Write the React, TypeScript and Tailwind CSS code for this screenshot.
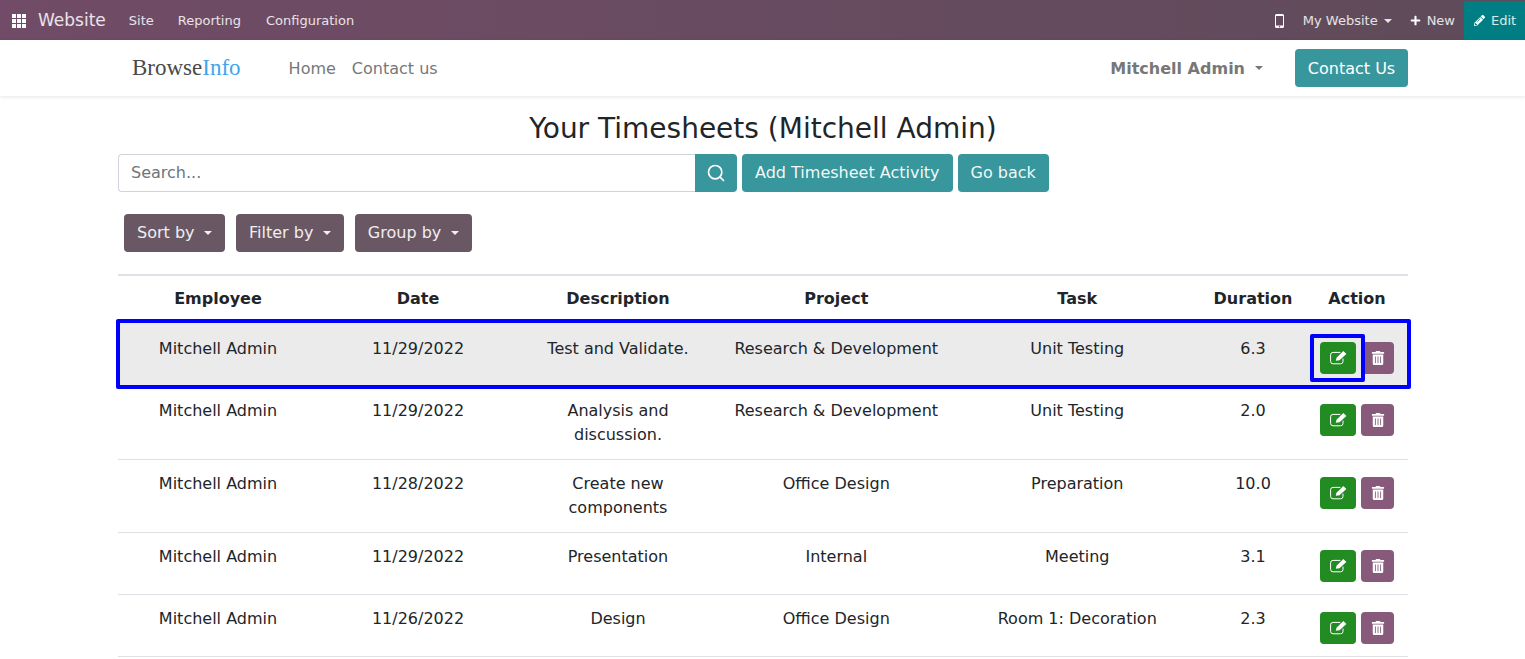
import { FaPencilAlt, FaPlus, FaTrashAlt } from 'react-icons/fa';
import { Search } from 'lucide-react';

const sans = 'font-["DejaVu_Sans",sans-serif]';

const rows = [
  { employee: 'Mitchell Admin', date: '11/29/2022', description: 'Test and Validate.', project: 'Research & Development', task: 'Unit Testing', duration: '6.3', height: 'h-[66px]', selected: true },
  { employee: 'Mitchell Admin', date: '11/29/2022', description: 'Analysis and discussion.', project: 'Research & Development', task: 'Unit Testing', duration: '2.0', height: 'h-[73px]' },
  { employee: 'Mitchell Admin', date: '11/28/2022', description: 'Create new components', project: 'Office Design', task: 'Preparation', duration: '10.0', height: 'h-[73px]' },
  { employee: 'Mitchell Admin', date: '11/29/2022', description: 'Presentation', project: 'Internal', task: 'Meeting', duration: '3.1', height: 'h-[62px]' },
  { employee: 'Mitchell Admin', date: '11/26/2022', description: 'Design', project: 'Office Design', task: 'Room 1: Decoration', duration: '2.3', height: 'h-[62px]' },
];

const tableCols = 'grid grid-cols-[200px_200px_200px_236.5px_245.5px_106px_102px]';

function Caret({ className = '' }: { className?: string }) {
  return <span className={`inline-block w-0 h-0 border-x-[4.8px] border-x-transparent border-t-[4.8px] border-t-current ${className}`} />;
}

function AppsIcon() {
  return (
    <svg width="14" height="14" viewBox="0 0 14 14" fill="white">
      {[0, 5, 10].map((y) =>
        [0, 5, 10].map((x) => <rect key={`${x}-${y}`} x={x} y={y} width="4" height="4" />)
      )}
    </svg>
  );
}

function PhoneIcon() {
  return (
    <svg width="9" height="14" viewBox="0 0 9 14" className="text-white">
      <path
        fillRule="evenodd"
        fill="currentColor"
        d="M1.5 0h6A1.5 1.5 0 0 1 9 1.5v11A1.5 1.5 0 0 1 7.5 14h-6A1.5 1.5 0 0 1 0 12.5v-11A1.5 1.5 0 0 1 1.5 0zM1 2v9.5h7V2zm3.5 10a.7.7 0 1 0 0 1.4.7.7 0 0 0 0-1.4z"
      />
    </svg>
  );
}

// pencil-in-a-square, the Font Awesome 4 one is heavier than what the packages have
function EditIcon() {
  return (
    <svg width="17" height="15" viewBox="0 0 17 15" fill="none" className="-mt-px">
      <path
        d="M13 9v2.4A2.4 2.4 0 0 1 10.6 13.8H3A2.4 2.4 0 0 1 .6 11.4V4.8A2.4 2.4 0 0 1 3 2.4H10"
        stroke="white"
        strokeWidth="1"
        strokeLinecap="round"
      />
      <path d="M5.8 10.8 6.5 7.8 13.4 1 16.4 4 9.5 10.2z" fill="white" />
    </svg>
  );
}

function DropdownButton({ label }: { label: string }) {
  return (
    <button className="h-[38px] px-[13px] flex items-center gap-[9.5px] rounded bg-[#695763] text-white/90 text-base">
      {label}
      <Caret />
    </button>
  );
}

function Row({ row }: { row: (typeof rows)[number] }) {
  const pad = row.selected ? 'pt-[16px]' : 'pt-[12px]';
  return (
    <div className={`${tableCols} relative text-center text-[#212529] text-base leading-6 ${row.height} ${row.selected ? 'bg-[#ebebeb]' : 'border-b border-[#dee2e6]'}`}>
      <div className={`${pad} px-2`}>{row.employee}</div>
      <div className={`${pad} px-2`}>{row.date}</div>
      <div className={`${pad} px-2`}>{row.description}</div>
      <div className={`${pad} px-1`}>{row.project}</div>
      <div className={`${pad} px-2`}>{row.task}</div>
      <div className={`${pad} px-2`}>{row.duration}</div>
      <div className={`${row.selected ? 'pt-[21px]' : 'pt-[17px]'} pl-[14px] flex gap-[5px] items-start`}>
        <button className="w-9 h-8 rounded bg-[#228b22] text-white flex items-center justify-center">
          <EditIcon />
        </button>
        <button className="w-[33px] h-8 rounded bg-[#875a7b] text-white flex items-center justify-center">
          <FaTrashAlt size={14} className="-mt-px" />
        </button>
      </div>
      {row.selected && (
        <>
          <div className="absolute -left-[2px] -right-[3px] -top-[2px] -bottom-[2px] border-4 border-[#0000ff] rounded-[2px]" />
          <div className="absolute left-[1192px] top-[13px] w-[55px] h-[48px] border-4 border-[#0000ff] rounded-[2px]" />
        </>
      )}
    </div>
  );
}

export default function App() {
  return (
    <div className={`${sans} h-[659px] overflow-hidden bg-white`}>
      {/* Odoo top bar */}
      <div className="h-10 pt-px flex items-center bg-gradient-to-r from-[#714b67] to-[#5f4b5a] text-white/85 text-[13px]">
        <div className="ml-3 flex items-center"><AppsIcon /></div>
        <span className="ml-3 text-[17px]">Website</span>
        <span className="ml-[23px]">Site</span>
        <span className="ml-6">Reporting</span>
        <span className="ml-[25px]">Configuration</span>
        <div className="ml-auto flex items-center h-full">
          <PhoneIcon />
          <span className="ml-[19px]">My Website</span>
          <Caret className="ml-[6px] mr-[18px]" />
          <FaPlus size={11} className="text-white mr-[6px]" />
          <span className="mr-[9px]">New</span>
          <div className="h-full w-[61px] -mt-px pt-px bg-[#017e84] flex items-center pl-[10px]">
            <FaPencilAlt size={11} className="text-white mr-[6px]" />
            <span>Edit</span>
          </div>
        </div>
      </div>

      {/* Site header */}
      <div className="h-14 flex items-center pl-[132px] pr-[117px] bg-white shadow-[0_1px_4px_rgba(0,0,0,0.1)] relative">
        <span className="font-['Liberation_Serif',serif] text-[23px] text-[#4a4a4a]">
          Browse<span className="text-[#3fa5ea]">Info</span>
        </span>
        <span className="ml-[48px] pt-px text-base text-[#777777]">Home</span>
        <span className="ml-4 pt-px text-base text-[#777777]">Contact us</span>
        <span className="ml-auto pt-px text-base font-bold text-[#777777]">Mitchell Admin</span>
        <Caret className="ml-[10px] mr-[32px] text-[#777777]" />
        <button className="h-[38px] w-[113px] pt-px rounded bg-[#38979d] text-white text-base">Contact Us</button>
      </div>

      <div className="pl-[118px] pr-[117px]">
        <h1 className="mt-[14px] text-center text-[28px] leading-[38px] text-[#212529]">Your Timesheets (Mitchell Admin)</h1>

        {/* Search and actions */}
        <div className="mt-[6px] flex items-center">
          <input
            placeholder="Search..."
            className="w-[577px] h-[38px] px-3 pb-px border border-[#ced4da] border-r-0 rounded-l text-base text-[#212529] placeholder:text-[#6c757d] outline-none"
          />
          <button className="w-[42px] h-[38px] rounded-r bg-[#38979d] text-white flex items-center justify-center">
            <Search size={20} className="-mt-px" />
          </button>
          <button className="ml-[5px] h-[38px] px-[13px] rounded bg-[#38979d] text-white/95 text-base">Add Timesheet Activity</button>
          <button className="ml-[5px] h-[38px] px-[13px] rounded bg-[#38979d] text-white/95 text-base">Go back</button>
        </div>

        {/* Dropdowns */}
        <div className="mt-[22px] ml-[6px] flex gap-[11px]">
          <DropdownButton label="Sort by" />
          <DropdownButton label="Filter by" />
          <DropdownButton label="Group by" />
        </div>

        {/* Table */}
        <div className="mt-[22px]">
          <div className={`${tableCols} h-[47px] items-center border-t-2 border-[#dee2e6] text-center font-bold text-[#212529] text-base`}>
            <div>Employee</div>
            <div>Date</div>
            <div>Description</div>
            <div>Project</div>
            <div>Task</div>
            <div>Duration</div>
            <div>Action</div>
          </div>
          {rows.map((row, i) => (
            <Row key={i} row={row} />
          ))}
        </div>
      </div>
    </div>
  );
}
